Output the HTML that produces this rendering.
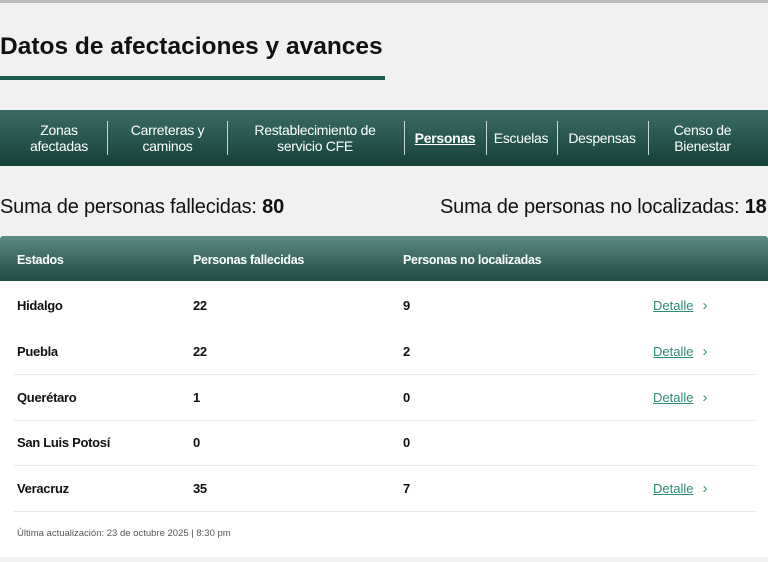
<!DOCTYPE html>
<html><head><meta charset="utf-8"><style>
body{margin:0;width:768px;height:562px;overflow:hidden;background:#f1f1f1;font-family:"Liberation Sans",sans-serif;color:#111;position:relative}
.top{position:absolute;left:0;top:0;width:768px;height:3px;background:#bbb}
h1{position:absolute;left:0;top:33px;margin:0;font-size:24.5px;font-weight:bold;letter-spacing:0px;white-space:nowrap}
.bar{position:absolute;left:0;top:76px;width:385px;height:4px;background:#1f5a4c}
.nav{position:absolute;left:0;top:110px;width:768px;height:56px;background:linear-gradient(#3a6d65,#15403a);}
.nav div{position:absolute;top:0;height:56px;display:flex;align-items:center;justify-content:center;text-align:center;color:#fff;font-size:14px;line-height:16px;letter-spacing:-0.3px}
.nav div.sep{top:11px;height:34px;width:1px;background:#c8d6d2}
.sum{position:absolute;top:196px;font-size:20px;letter-spacing:-0.2px;white-space:nowrap}
.card{position:absolute;left:0;top:236px;width:768px;height:321px;background:#fff}
.th{position:absolute;left:0;top:0;width:768px;height:45px;background:linear-gradient(#5c8a85,#204a44);border-radius:3px 3px 0 0}
.th span{position:absolute;top:17px;color:#fff;font-weight:bold;font-size:12.5px;letter-spacing:-0.3px}
.row{position:absolute;left:14px;width:741px;height:46px;border-bottom:1px solid #e6e6e6}
.row span{position:absolute;top:16px;font-weight:bold;font-size:13px;letter-spacing:-0.3px}
.row a{position:absolute;left:639px;top:16px;font-size:13px;color:#2b8a78;text-decoration:underline}
.row a:after{content:"\203A";text-decoration:none;display:inline-block;margin-left:9px;color:#3a8f80;font-size:15px;line-height:13px}
.foot{position:absolute;left:17px;top:528px;font-size:9.5px;color:#555}
</style></head><body>
<div class="top"></div>
<h1>Datos de afectaciones y avances</h1>
<div class="bar"></div>
<div class="nav">
<div style="left:20px;width:78px">Zonas<br>afectadas</div>
<div class="sep" style="left:107px"></div>
<div style="left:115px;width:105px">Carreteras y<br>caminos</div>
<div class="sep" style="left:227px"></div>
<div style="left:235px;width:160px">Restablecimiento de<br>servicio CFE</div>
<div class="sep" style="left:404px"></div>
<div style="left:408px;width:74px;font-weight:bold;text-decoration:underline">Personas</div>
<div class="sep" style="left:486px"></div>
<div style="left:489px;width:64px">Escuelas</div>
<div class="sep" style="left:557px"></div>
<div style="left:560px;width:84px">Despensas</div>
<div class="sep" style="left:648px"></div>
<div style="left:655px;width:95px">Censo de<br>Bienestar</div>
</div>
<div class="sum" style="left:0">Suma de personas fallecidas: <b>80</b></div>
<div class="sum" style="left:440px">Suma de personas no localizadas: <b>18</b></div>
<div class="card">
<div class="th"><span style="left:17px">Estados</span><span style="left:193px">Personas fallecidas</span><span style="left:403px">Personas no localizadas</span></div>
<div class="row" style="top:46px;border:0"><span style="left:3px">Hidalgo</span><span style="left:179px">22</span><span style="left:389px">9</span><a>Detalle</a></div>
<div class="row" style="top:92px"><span style="left:3px">Puebla</span><span style="left:179px">22</span><span style="left:389px">2</span><a>Detalle</a></div>
<div class="row" style="top:138px"><span style="left:3px">Querétaro</span><span style="left:179px">1</span><span style="left:389px">0</span><a>Detalle</a></div>
<div class="row" style="top:183px"><span style="left:3px">San Luis Potosí</span><span style="left:179px">0</span><span style="left:389px">0</span></div>
<div class="row" style="top:229px"><span style="left:3px">Veracruz</span><span style="left:179px">35</span><span style="left:389px">7</span><a>Detalle</a></div>
</div>
<div class="foot">Última actualización: 23 de octubre 2025 | 8:30 pm</div>
</body></html>
